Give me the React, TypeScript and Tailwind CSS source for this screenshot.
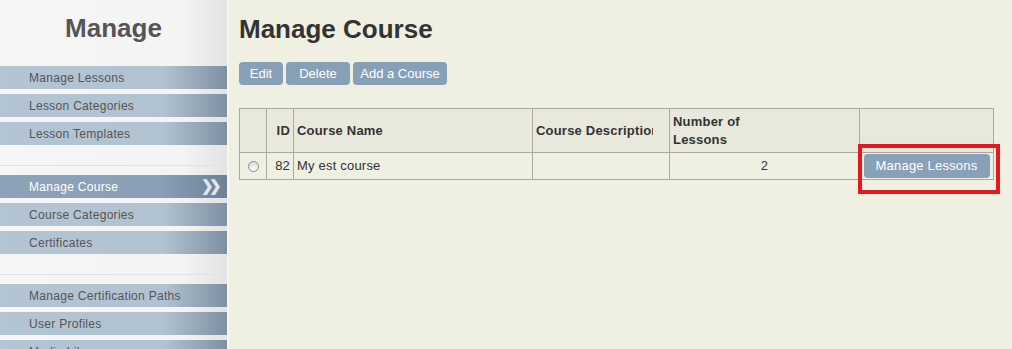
import React from "react";

const groups: { label: string; active?: boolean }[][] = [
  [{ label: "Manage Lessons" }, { label: "Lesson Categories" }, { label: "Lesson Templates" }],
  [{ label: "Manage Course", active: true }, { label: "Course Categories" }, { label: "Certificates" }],
  [{ label: "Manage Certification Paths" }, { label: "User Profiles" }, { label: "Media Library" }],
];

function NavItem({ label, active }: { label: string; active?: boolean }) {
  return (
    <div
      className={
        "relative flex h-[23px] items-center pl-[29px] text-[12px] tracking-[0.3px] " +
        (active
          ? "bg-[linear-gradient(to_right,#8da3ba_0%,#8aa0b7_70%,#6b8197_100%)] text-white"
          : "bg-[linear-gradient(to_right,#b3c4d2_0%,#b1c2d0_72%,#7e90a3_100%)] text-[#555]")
      }
    >
      {label}
      {active && (
        <span className="absolute right-[10px] top-[2px] text-[15px] font-bold leading-[18px] tracking-[-5px] text-[#dfe7ef]">
          ❯❯
        </span>
      )}
    </div>
  );
}

function Sidebar() {
  return (
    <aside className="w-[227px] shrink-0 bg-[linear-gradient(to_right,#f6f6f6_0%,#f4f4f4_80%,#e3e3e3_100%)]">
      <h1 className="pt-[12px] text-center text-[26px] font-bold leading-[32px] text-[#555]">Manage</h1>
      <div className="mt-[22px] flex flex-col">
        {groups.map((g, gi) => (
          <div key={gi} className="flex flex-col">
            {gi > 0 && (
              <div className="flex h-[30px] flex-col pt-[20px]">
                <div className="h-px bg-[#e2e2e2]" />
              </div>
            )}
            <div className="flex flex-col gap-[5px]">
              {g.map((it) => (
                <NavItem key={it.label} {...it} />
              ))}
            </div>
          </div>
        ))}
      </div>
    </aside>
  );
}

const btn = "h-[23px] rounded-[4px] bg-[#87a0b8] text-[13px] text-white";
const cell = "border border-[#aaa9a0]";

export default function App() {
  return (
    <div className="flex h-[349px] w-[1012px] overflow-hidden bg-[#efefe2] font-['Liberation_Sans',Arial,sans-serif]">
      <Sidebar />
      <div className="w-[2px] shrink-0 bg-[#f7f7ef]" />
      <main className="flex-1 pl-[10px]">
        <h2 className="mt-[14px] text-[26px] font-bold leading-[30px] text-[#333]">Manage Course</h2>
        <div className="mt-[18px] flex gap-[3px]">
          <button className={btn + " w-[44px]"}>Edit</button>
          <button className={btn + " w-[64px]"}>Delete</button>
          <button className={btn + " w-[94px]"}>Add a Course</button>
        </div>
        <table className="mt-[23px] w-[754px] table-fixed border-collapse text-[13px] tracking-[0.2px] text-[#333]">
          <colgroup>
            <col className="w-[27px]" />
            <col className="w-[27px]" />
            <col className="w-[239px]" />
            <col className="w-[137px]" />
            <col className="w-[190px]" />
            <col className="w-[134px]" />
          </colgroup>
          <thead>
            <tr className="h-[44px] bg-[#e9e8dc] font-bold">
              <th className={cell} />
              <th className={cell + " px-[3px] text-right"}>ID</th>
              <th className={cell + " px-[3px] text-left"}>Course Name</th>
              <th className={cell + " px-[3px] text-left"}>
                <span className="block w-[117px] overflow-hidden whitespace-nowrap">Course Description</span>
              </th>
              <th className={cell + " px-[3px] text-left leading-[18px]"}>
                Number of
                <br />
                Lessons
              </th>
              <th className={cell} />
            </tr>
          </thead>
          <tbody>
            <tr className="h-[27px]">
              <td className={cell + " text-center"}>
                <span className="inline-block h-[11px] w-[11px] translate-y-[2px] rounded-full border border-[#888] bg-[linear-gradient(#ddd,#fff)]" />
              </td>
              <td className={cell + " px-[3px] text-right"}>82</td>
              <td className={cell + " px-[3px]"}>My est course</td>
              <td className={cell} />
              <td className={cell + " text-center"}>2</td>
              <td className={cell + " relative p-0"}>
                <div className="flex justify-center">
                  <button className="h-[24px] w-[126px] rounded-[4px] bg-[#88a0b8] text-[13px] tracking-[0.2px] text-white">
                    Manage Lessons
                  </button>
                </div>
                <div className="pointer-events-none absolute left-[-2px] top-[-9px] h-[50px] w-[142px] border-[4px] border-[#e8161f]" />
              </td>
            </tr>
          </tbody>
        </table>
      </main>
    </div>
  );
}
